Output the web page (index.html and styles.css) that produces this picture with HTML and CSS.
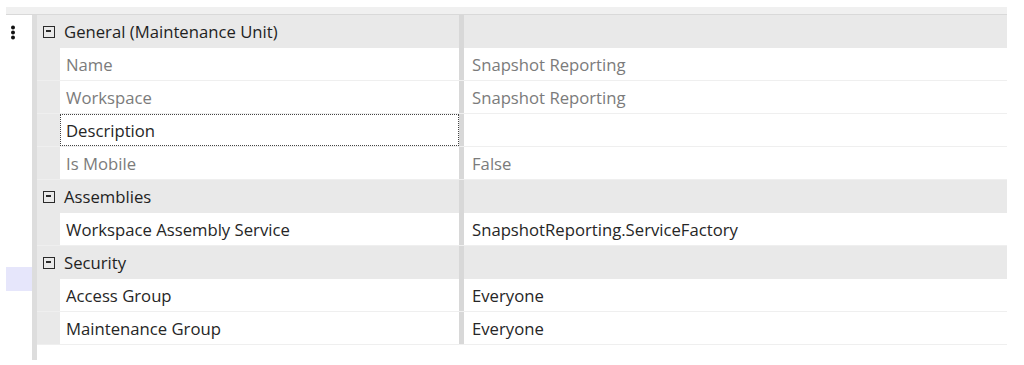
FILE: index.html
```html
<!DOCTYPE html>
<html>
<head>
<meta charset="utf-8">
<link rel="stylesheet" href="styles.css">
</head>
<body>
<div class="page">
  <div class="topbar"></div>
  <div class="main">
    <div class="side">
      <svg class="dots" width="6" height="16" viewBox="0 0 6 16"><circle cx="3" cy="2.5" r="2"/><circle cx="3" cy="7.5" r="2"/><circle cx="3" cy="12.5" r="2"/></svg>
      <div class="selmark"></div>
    </div>
    <div class="grid">
      <div class="row cat"><div class="catlabel"><span class="toggle"></span><span>General (Maintenance Unit)</span></div><div class="split"></div><div class="val"></div></div>
      <div class="row prop"><div class="indent"></div><div class="label ro">Name</div><div class="split"></div><div class="val ro">Snapshot Reporting</div></div>
      <div class="row prop"><div class="indent"></div><div class="label ro">Workspace</div><div class="split"></div><div class="val ro">Snapshot Reporting</div></div>
      <div class="row prop"><div class="indent"></div><div class="label focus">Description</div><div class="split"></div><div class="val"></div></div>
      <div class="row prop"><div class="indent"></div><div class="label ro">Is Mobile</div><div class="split"></div><div class="val ro">False</div></div>
      <div class="row cat"><div class="catlabel"><span class="toggle"></span><span>Assemblies</span></div><div class="split"></div><div class="val"></div></div>
      <div class="row prop"><div class="indent"></div><div class="label">Workspace Assembly Service</div><div class="split"></div><div class="val">SnapshotReporting.ServiceFactory</div></div>
      <div class="row cat"><div class="catlabel"><span class="toggle"></span><span>Security</span></div><div class="split"></div><div class="val"></div></div>
      <div class="row prop"><div class="indent"></div><div class="label">Access Group</div><div class="split"></div><div class="val">Everyone</div></div>
      <div class="row prop"><div class="indent"></div><div class="label">Maintenance Group</div><div class="split"></div><div class="val">Everyone</div></div>
      <div class="tail"></div>
    </div>
  </div>
</div>
</body>
</html>
```

FILE: styles.css
```css
* { box-sizing: border-box; }
html, body { margin: 0; padding: 0; background: #ffffff; }
body {
  font-family: "Open Sans", "Noto Sans", "Liberation Sans", sans-serif;
  font-size: 16.7px;
  color: #262626;
}
.page { padding-top: 7px; }
.topbar {
  margin-left: 6px;
  width: 1001px;
  height: 8px;
  background: #f0f0f0;
  border-bottom: 1px solid #d9d9d9;
}
.main { display: flex; }
.side {
  width: 32px;
  display: flex;
  flex-direction: column;
  align-items: flex-start;
}
.dots { margin: 10px 0 0 10px; fill: #111; }
.selmark {
  margin-top: 226px;
  margin-left: 6px;
  width: 26px;
  height: 24px;
  background: #e6e6fb;
}
.grid {
  width: 975px;
  border-left: 5px solid #dddddd;
  display: flex;
  flex-direction: column;
}
.row { display: flex; height: 33px; }
.cat { background: #e9e9e9; }
.catlabel {
  width: 422px;
  display: flex;
  align-items: center;
  padding-left: 6px;
  gap: 9px;
  color: #1f1f1f;
}
.toggle {
  position: relative;
  width: 12px;
  height: 12px;
  border: 1.5px solid #2a2a2a;
  flex: none;
}
.toggle::after {
  content: "";
  position: absolute;
  left: 2px;
  top: 3.75px;
  width: 5px;
  height: 1.5px;
  background: #2a2a2a;
}
.split { width: 5px; flex: none; background: #d8d8d8; }
.prop { border-bottom: 1px solid #efefef; }
.indent { width: 23px; flex: none; background: #e9e9e9; }
.label {
  width: 399px;
  display: flex;
  align-items: center;
  padding-left: 6px;
  color: #262626;
}
.label.focus { border: 1px dotted #444; padding-left: 5px; }
.val {
  flex: 1;
  display: flex;
  align-items: center;
  padding-left: 8px;
  color: #262626;
}
.ro { color: #7b7b7b; }
.tail { height: 15px; width: 0; }
```
